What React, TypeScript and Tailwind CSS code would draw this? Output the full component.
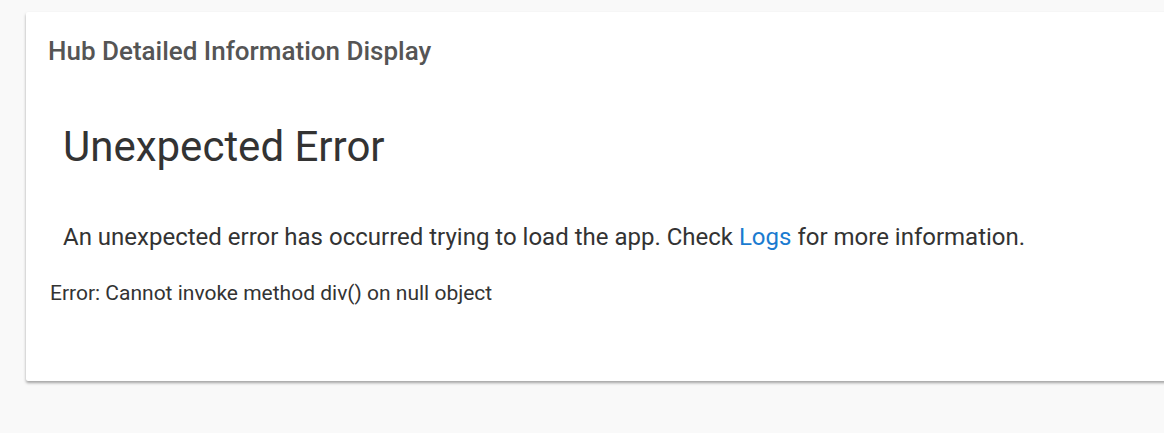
import React from 'react';

export default function App() {
  return (
    <div className="min-h-[433px] w-full overflow-hidden bg-[#f9f9f9] pl-[26px] pt-[12px] font-['Roboto',sans-serif]">
      <div className="-mr-[10px] h-[369px] rounded-[2px] bg-white shadow-[0_2px_3px_rgba(0,0,0,0.35)]">
        <div className="px-[22px] pt-[24px] text-[26px] font-medium leading-[30px] text-[#555]">
          Hub Detailed Information Display
        </div>
        <div className="pl-[37px] pt-[56px]">
          <h1 className="text-[42px] leading-[50px] text-[#333]">Unexpected Error</h1>
          <p className="pt-[51px] text-[24px] leading-[28px] text-[#333]">
            An unexpected error has occurred trying to load the app. Check{' '}
            <a href="#" className="text-[#1a7bd0]">Logs</a> for more information.
          </p>
        </div>
        <div className="pl-[24px] pt-[30px] text-[21px] leading-[24px] text-[#333]">
          Error: Cannot invoke method div() on null object
        </div>
      </div>
    </div>
  );
}
